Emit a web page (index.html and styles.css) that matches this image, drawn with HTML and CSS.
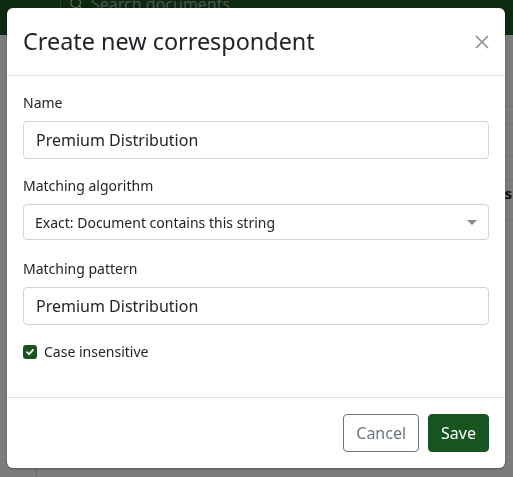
FILE: index.html
```html
<!DOCTYPE html>
<html lang="en">
<head>
    <meta charset="UTF-8">
    <meta name="viewport" content="width=device-width, initial-scale=1.0">
    <title>Create new correspondent</title>
    <link rel="stylesheet" href="styles.css">
</head>
<body>
    <!-- page behind the dialog -->
    <nav class="navbar">
        <div class="search">
            <svg class="search-icon" width="14" height="14" viewBox="0 0 16 16">
                <circle cx="6.5" cy="6.5" r="5.5" fill="none" stroke="currentColor" stroke-width="1.4"/>
                <line x1="10.5" y1="10.5" x2="15" y2="15" stroke="currentColor" stroke-width="1.4"/>
            </svg>
            <span>Search documents</span>
        </div>
    </nav>
    <div class="page">
        <aside class="sidebar"></aside>
        <main class="content">
            <div class="row" style="height: 72px"></div>
            <div class="row" style="height: 18px"></div>
            <div class="row" style="height: 32px"></div>
            <div class="row" style="height: 24px"></div>
            <div class="row head" style="height: 39px"><b>Documents</b></div>
        </main>
    </div>

    <div class="backdrop"></div>

    <div class="modal">
        <div class="modal-dialog">
            <div class="modal-header">
                <h4 class="modal-title">Create new correspondent</h4>
                <button class="btn-close" aria-label="Close">
                    <svg width="14" height="14" viewBox="0 0 14 14">
                        <path d="M1 1L13 13M13 1L1 13" stroke="#8c8c8c" stroke-width="1.6" fill="none"/>
                    </svg>
                </button>
            </div>
            <div class="modal-body">
                <div class="field">
                    <label for="name">Name</label>
                    <input type="text" id="name" class="form-control" value="Premium Distribution">
                </div>
                <div class="field field-select">
                    <label>Matching algorithm</label>
                    <div class="form-select">
                        <span>Exact: Document contains this string</span>
                        <span class="caret"></span>
                    </div>
                </div>
                <div class="field">
                    <label for="pattern">Matching pattern</label>
                    <input type="text" id="pattern" class="form-control" value="Premium Distribution">
                </div>
                <div class="form-check">
                    <span class="check-box">
                        <svg width="10" height="10" viewBox="0 0 10 10">
                            <path d="M2 5.2L4.1 7.2L8 2.8" stroke="#fff" stroke-width="1.8" fill="none" stroke-linecap="round" stroke-linejoin="round"/>
                        </svg>
                    </span>
                    <span>Case insensitive</span>
                </div>
            </div>
            <div class="modal-footer">
                <button class="btn btn-outline">Cancel</button>
                <button class="btn btn-primary">Save</button>
            </div>
        </div>
    </div>
</body>
</html>
```

FILE: styles.css
```css
* {
    box-sizing: border-box;
}
body {
    margin: 0;
    font-family: "Noto Sans", "Open Sans", sans-serif;
    background-color: #f7f8f8;
    color: #212529;
    height: 477px;
    overflow: hidden;
}
.navbar {
    background-color: #17541f;
    height: 35px;
    padding-left: 60px;
    overflow: hidden;
}
.search {
    display: flex;
    align-items: center;
    gap: 7px;
    height: 24px;
    margin-top: -8px;
    padding-left: 9px;
    border-left: 1px solid #4c7a52;
    color: #9aa8a0;
    font-size: 16px;
}
.search-icon {
    color: #c8d0cb;
}
.page {
    display: flex;
}
.sidebar {
    width: 37px;
    height: 450px;
    border-right: 1px solid #d4d7da;
}
.content {
    flex: 1;
}
.row {
    border-bottom: 1px solid #dee2e6;
}
.row.head {
    text-align: right;
    font-size: 15px;
    line-height: 24px;
    padding-right: 1px;
    color: #212529;
}

.backdrop {
    position: fixed;
    inset: 0;
    background-color: rgba(0, 0, 0, 0.5);
}
.modal {
    position: fixed;
    inset: 0;
}
.modal-dialog {
    margin: 8px 0 0 7px;
    width: 498px;
    background-color: #fff;
    border-radius: 6px;
    box-shadow: 0 1px 3px rgba(0, 0, 0, 0.3);
}
.modal-header {
    display: flex;
    align-items: center;
    justify-content: space-between;
    padding: 16px;
    border-bottom: 1px solid #dee2e6;
}
.modal-title {
    margin: 0;
    font-size: 23.4px;
    font-weight: 400;
    line-height: 35px;
}
.btn-close {
    background: none;
    border: none;
    padding: 0;
    width: 14px;
    height: 14px;
    display: flex;
}
.modal-body {
    padding: 16px 16px 0 16px;
}
.field {
    margin-bottom: 16px;
}
.field-select {
    margin-bottom: 18px;
}
.field label {
    display: block;
    font-size: 14px;
    line-height: 21px;
    margin-bottom: 8px;
}
.form-control {
    display: block;
    width: 100%;
    height: 38px;
    padding: 0 12px;
    font-family: inherit;
    font-size: 16px;
    color: #212529;
    border: 1px solid #ced4da;
    border-radius: 4px;
    outline: none;
}
.form-select {
    display: flex;
    align-items: center;
    justify-content: space-between;
    height: 36px;
    padding: 0 11px 0 11px;
    font-size: 14px;
    border: 1px solid #ced4da;
    border-radius: 4px;
}
.caret {
    width: 0;
    height: 0;
    border-left: 5px solid transparent;
    border-right: 5px solid transparent;
    border-top: 5px solid #8a8a8a;
}
.form-check {
    display: flex;
    align-items: center;
    gap: 7px;
    font-size: 14px;
    line-height: 21px;
    padding-bottom: 35px;
}
.check-box {
    width: 14px;
    height: 14px;
    border-radius: 3px;
    background-color: #17541f;
    display: flex;
    align-items: center;
    justify-content: center;
}
.modal-footer {
    display: flex;
    justify-content: flex-end;
    gap: 9px;
    padding: 16px;
    border-top: 1px solid #dee2e6;
}
.btn {
    font-family: inherit;
    font-size: 16px;
    line-height: 24px;
    padding: 6px 12px;
    border-radius: 4px;
    cursor: pointer;
}
.btn-outline {
    background-color: #fff;
    color: #6c757d;
    border: 1px solid #6c757d;
}
.btn-primary {
    background-color: #17541f;
    color: #fff;
    border: 1px solid #17541f;
}
```
